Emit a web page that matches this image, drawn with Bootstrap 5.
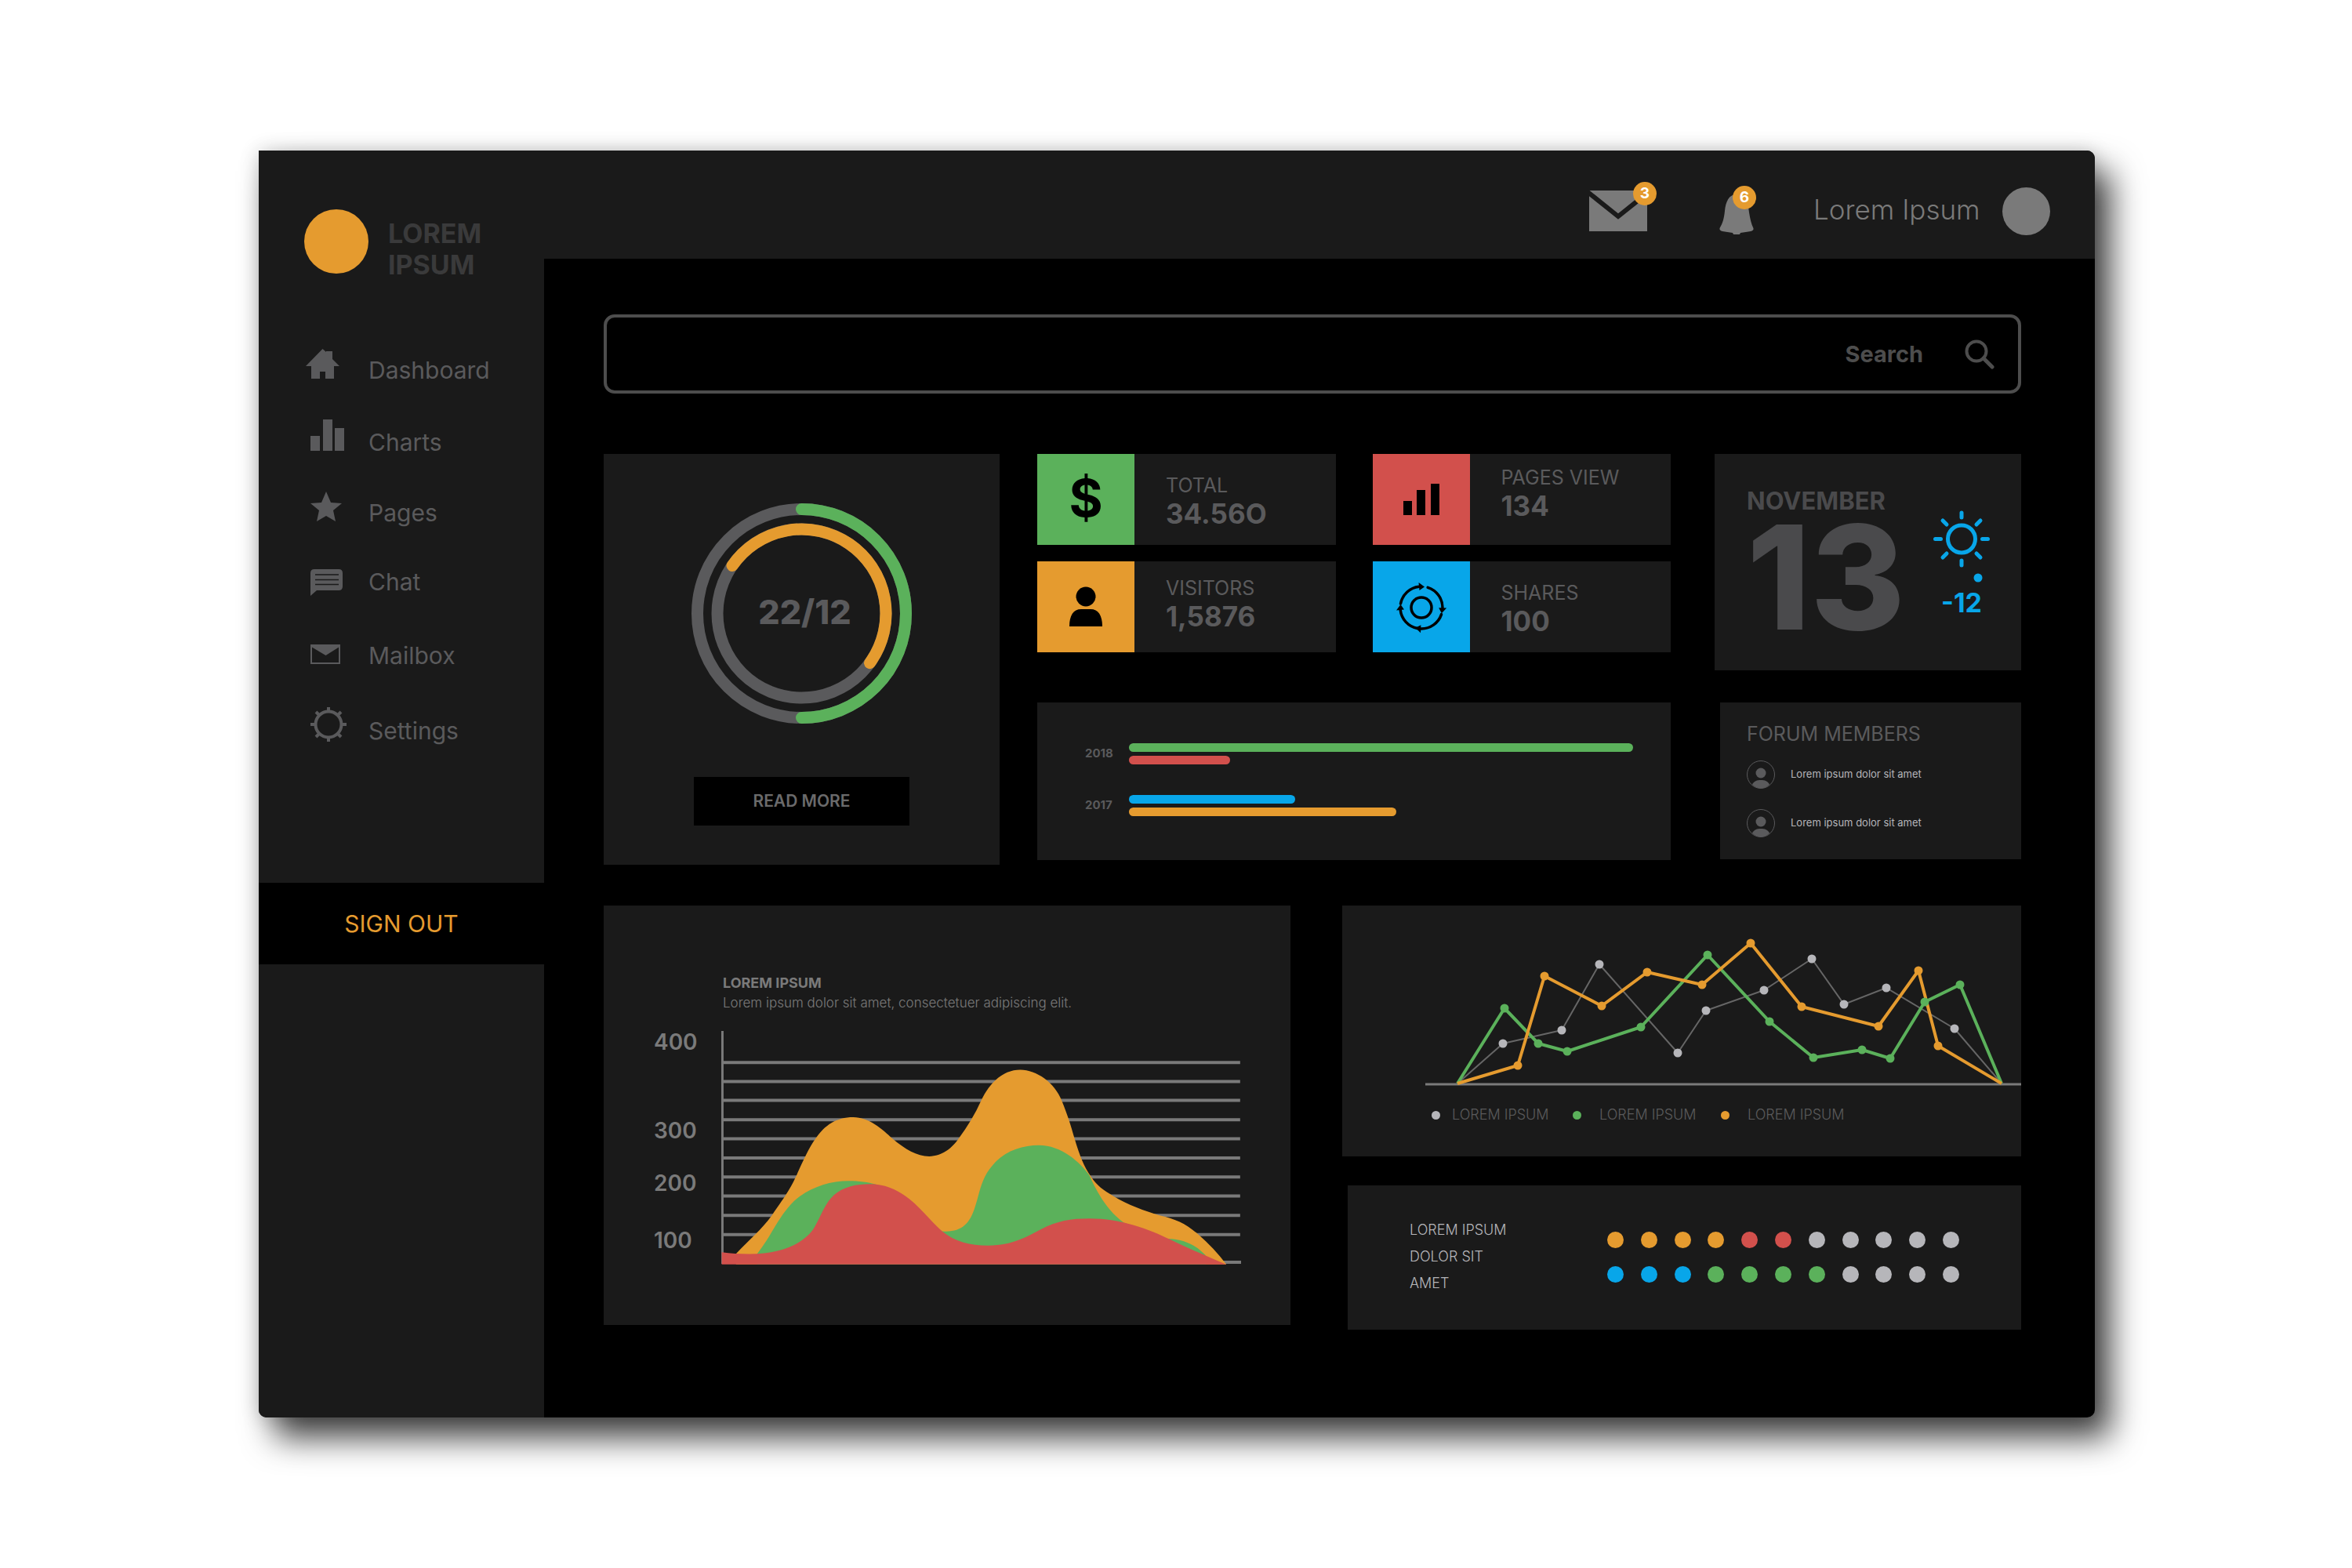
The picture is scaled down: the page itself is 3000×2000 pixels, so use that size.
<!DOCTYPE html>
<html lang="en">
<head>
<meta charset="utf-8">
<meta name="viewport" content="width=device-width, initial-scale=1">
<title>Dashboard</title>
<link rel="stylesheet" href="https://cdn.jsdelivr.net/npm/bootstrap@5.3.0/dist/css/bootstrap.min.css">
<style>
:root{--panel:#1a1a1a;--ink:#5a5a5c;--soft:#7a7a7a;--pale:#b6b6ba;--green:#5bb15b;--red:#d2504c;--orange:#e59b2f;--blue:#08a6e9}
body{background:#fff;color:var(--ink);font-family:Inter,"Noto Sans",sans-serif;padding:192px 328px 192px 330px}
a{color:inherit;text-decoration:none}
svg{display:block}
.app-window{background:#000;border-radius:0 10px 10px 10px;overflow:hidden;min-height:1616px;box-shadow:20px 26px 42px rgba(0,0,0,.74),0 0 24px rgba(0,0,0,.18)}
.side{flex:0 0 364px;background:var(--panel);padding-top:75px}
.brand{padding-left:58px;gap:25px;color:#3a3a3b;font-size:34px;line-height:40px;font-weight:700}
.brand-dot{width:82px;height:82px;background:var(--orange)}
.brand-name{padding-top:11px}
.side-nav{display:grid;grid-template-rows:92px 90px 88px 94px 96px 52px;margin-top:81px;padding-left:58px}
.side-nav a{display:flex;align-items:flex-end;gap:28px;height:52px;font-size:30px;line-height:38px}
.side-nav svg{width:54px;height:52px;fill:var(--ink)}
.sign-out{margin-top:175px;height:104px;background:#000;color:var(--orange);font-size:30px;border:0}
.topbar{height:138px;background:var(--panel);padding:16px 57px 0 0;color:var(--soft)}
.topbar svg{fill:var(--soft)}
.mail-link{margin-right:92px}
.bell-link{margin-right:76px}
.count{position:absolute;width:30px;height:30px;border-radius:50%;background:var(--orange);color:#fff;font-weight:700;font-size:19px;line-height:30px;text-align:center}
.mail-link .count{right:-12px;top:-11px}
.bell-link .count{right:-3px;top:-2px}
.user-name{width:241px;font-size:35px;font-weight:300;line-height:56px;white-space:nowrap;padding-bottom:4px}
.user-dot{width:61px;height:61px;background:var(--soft)}
.content{padding:71px 94px 0 76px}
.search{height:101px;border:4px solid #4d4d4d;border-radius:14px;padding-right:30px;color:#4d4d4d}
.search input{background:transparent;border:0;color:inherit;font-size:28px;padding-left:28px;outline:0;min-width:0}
.search label{font-size:29px;font-weight:700}
.search button{background:none;border:0;padding:0;margin-left:53px}
.tile{background:var(--panel)}
.row-top{margin-top:77px}
.row-low{display:grid;grid-template-columns:876fr 866fr;gap:66px;margin-top:52px}
.col-ring{flex:505 1 0;margin-right:48px;min-height:524px;padding-top:63px}
.col-mid{flex:808 1 0;margin-right:56px}
.col-date{flex:391 1 0}
.ring-box{width:281px;height:281px}
.ring-label{position:absolute;inset:0;line-height:277px;text-align:center;font-size:43px;font-weight:800;padding-left:8px}
.read-more{width:275px;height:62px;margin-top:68px;background:#000;border:0;color:#6a6a6b;font-weight:600;font-size:21px}
.stats{display:grid;grid-template-columns:1fr 1fr;gap:21px 47px}
.stat{height:116px}
.stat-icon{width:124px;color:#000;font-size:66px;font-weight:700;line-height:112px}
.stat-text{padding-left:40px}
.stat-name{font-size:25px;line-height:32px}
.stat-value{font-size:35px;line-height:40px;font-weight:700}
.bars{margin-top:64px;min-height:200px;padding:52px 48px 56px 61px;gap:39px}
.bars-year{width:56px;font-size:15px;font-weight:700}
.bar-line{height:11px;border-radius:6px}
.date-tile{min-height:276px;padding:42px 40px 40px 41px;color:#4a4a4c}
.month{font-size:31px;line-height:36px;font-weight:700}
.day{font-size:184px;line-height:158px;font-weight:800}
.weather{width:72px;padding-top:30px;color:var(--blue);font-size:34px;line-height:40px;font-weight:700;margin-left:auto}
.temp{margin-top:6px}
.forum{margin:41px 0 0 7px;min-height:200px;padding:24px 35px 26px 34px}
.forum-title{font-size:25px;line-height:32px}
.forum-list{margin-top:18px;gap:26px;font-size:13px;color:var(--pale)}
.forum-list li{gap:20px}
.area-tile{min-width:0;min-height:535px;padding:86px 63px 77px 64px;color:var(--soft)}
.area-head{padding-left:88px}
.area-title{font-size:18px;line-height:26px;font-weight:700}
.area-note{font-size:17px;line-height:24px;font-weight:300}
.area-scale{flex:0 0 86px;display:grid;grid-template-rows:113px 67px 73px 28px;font-size:28px;line-height:28px;font-weight:600}
.area-plot{width:100%;height:298px}
.col-right{min-width:0}
.line-tile{min-height:320px;padding:34px 0 41px 106px}
.line-plot{width:100%;height:198px}
.legend-row{margin-top:23px;padding-left:8px;font-size:18px;line-height:24px;font-weight:300}
.legend-row li{gap:23px;width:189px}
.legend-row li:first-child{gap:15px;width:180px}
.legend-dot{width:11px;height:11px}
.score-tile{margin:37px 0 0 7px;min-height:184px;padding:40px 79px 40px 79px}
.score-text{font-size:18px;line-height:34px;font-weight:300;color:var(--pale)}
.score-dots{width:449px;padding-top:19px;gap:23px}
.score-dots i{width:21px;height:21px;border-radius:50%}
.c-green{background:var(--green)}.c-red{background:var(--red)}.c-orange{background:var(--orange)}.c-blue{background:var(--blue)}.c-pale{background:var(--pale)}
</style>
</head>
<body>
<div class="app-window d-flex">
  <aside class="side d-flex flex-column">
    <div class="brand d-flex align-items-start">
      <span class="brand-dot rounded-circle"></span>
      <div class="brand-name">LOREM<br>IPSUM</div>
    </div>
    <nav class="side-nav">
      <a href="#"><svg viewBox="0 0 54 52"><path d="M2 28 23.500 6 28 10V9h8v10l9 9h-7v16H27V35h-7v9H9V28z"/></svg>Dashboard</a>
      <a href="#"><svg viewBox="0 0 54 52"><path d="M8 25h12v19H8zM24 4h12v40H24zM39 15h12v29H39z"/></svg>Charts</a>
      <a href="#"><svg viewBox="0 0 54 52"><path d="m28 6 6 14 14 1-11 9 3 14-12-7-12 7 3-14L8 21l14-1z"/></svg>Pages</a>
      <a href="#"><svg viewBox="0 0 54 52"><path d="M13 17h31q5 0 5 5v17q0 5-5 5H16l-8 7V22q0-5 5-5z"/><path d="M14 24h30M14 30.500h30M14 36.500h30" stroke="#1a1a1a" stroke-width="1.500"/></svg>Chat</a>
      <a href="#"><svg viewBox="0 0 54 52"><path d="M9 20h36v23H9z" fill="none" stroke="#5a5a5c" stroke-width="2"/><path d="M9 19h36v3L27.500 33 9 22z"/></svg>Mailbox</a>
      <a href="#"><svg viewBox="0 0 54 52"><g fill="none" stroke="#5a5a5c" stroke-width="4"><circle cx="31" cy="25" r="16.500"/><path d="M31 9V3M31 41v6M15 25H8M47 25h7M20 14l-5-5M42 14l5-5M20 36l-5 5M42 36l5 5"/></g></svg>Settings</a>
    </nav>
    <button type="button" class="sign-out">SIGN OUT</button>
  </aside>

  <div class="flex-grow-1">
    <header class="topbar d-flex justify-content-end align-items-center">
      <a href="#" class="mail-link position-relative" aria-label="Messages"><svg width="74" height="52" viewBox="0 0 74 52"><path d="M0 0h74v52H0z"/><path d="M-3 1 37 33 77 1" fill="none" stroke="#1a1a1a" stroke-width="6"/></svg><span class="count">3</span></a>
      <a href="#" class="bell-link position-relative" aria-label="Alerts"><svg width="44" height="60" viewBox="0 0 44 60"><path d="M22 9C12 9 8 19 7 30 6 40 4 46 1 51q-2 4 3 5 6 1 13 2 1 3 5 3t5-3q7-1 13-2 5-1 3-5-3-6-5-19C37 20 33 9 22 9z"/></svg><span class="count">6</span></a>
      <a href="#" class="user-name">Lorem Ipsum</a>
      <span class="user-dot rounded-circle"></span>
    </header>

    <main class="content">
      <form class="search d-flex align-items-center">
        <input type="text" id="q" class="flex-grow-1">
        <label for="q">Search</label>
        <button type="button" aria-label="Search"><svg width="38" height="38" viewBox="0 0 38 38" fill="none" stroke="#4d4d4d"><circle cx="15" cy="15" r="12.500" stroke-width="4"/><path d="m24 24 11 11" stroke-width="5" stroke-linecap="round"/></svg></button>
      </form>

      <div class="row-top d-flex align-items-start">
        <section class="tile col-ring d-flex flex-column align-items-center">
          <div class="ring-box position-relative">
            <svg viewBox="-140.500 -140.500 281 281" width="281" height="281" fill="none" stroke-width="15" stroke-linecap="round">
              <circle r="133" stroke="#5a5a5c"/><circle r="107.500" stroke="#5a5a5c"/>
              <path d="M0-133A133 133 0 0 1 0 133" stroke="#5bb15b"/>
              <circle r="107.500" stroke="#e59b2f" stroke-dasharray="340 400" transform="rotate(214.600)"/>
            </svg>
            <div class="ring-label">22/12</div>
          </div>
          <button type="button" class="read-more">READ MORE</button>
        </section>

        <div class="col-mid">
          <div class="stats">
            <section class="tile stat d-flex">
              <div class="stat-icon c-green text-center">$</div>
              <div class="stat-text d-flex flex-column justify-content-center pt-1"><div class="stat-name">TOTAL</div><div class="stat-value">34.56O</div></div>
            </section>
            <section class="tile stat d-flex">
              <div class="stat-icon c-red"><svg width="124" height="116" viewBox="0 0 124 116"><path d="M39 60h11v18H39zM56 46h11v32H56zM74 38h11v40H74z"/></svg></div>
              <div class="stat-text d-flex flex-column justify-content-center pb-3"><div class="stat-name">PAGES VIEW</div><div class="stat-value">134</div></div>
            </section>
            <section class="tile stat d-flex">
              <div class="stat-icon c-orange"><svg width="124" height="116" viewBox="0 0 124 116"><circle cx="62" cy="45" r="12.500"/><path d="M41 83c0-14 5-22 15-22h12c10 0 15 8 15 22z"/></svg></div>
              <div class="stat-text d-flex flex-column justify-content-center pb-2"><div class="stat-name">VISITORS</div><div class="stat-value">1,5876</div></div>
            </section>
            <section class="tile stat d-flex">
              <div class="stat-icon c-blue"><svg width="124" height="116" viewBox="0 0 124 116"><g transform="translate(62 59)"><circle r="13" fill="none" stroke="#000" stroke-width="3.500"/>
                <g id="arm"><path d="M-26.500-5A27 27 0 0 1-3-26.800" fill="none" stroke="#000" stroke-width="3.500" stroke-linecap="round"/><path d="M-3.500-32 4-26.500-2.500-22z"/></g>
                <use href="#arm" transform="rotate(97)"/><use href="#arm" transform="rotate(188)"/><use href="#arm" transform="rotate(270)"/></g></svg></div>
              <div class="stat-text d-flex flex-column justify-content-center pt-1"><div class="stat-name">SHARES</div><div class="stat-value">100</div></div>
            </section>
          </div>
          <section class="tile bars d-flex flex-column">
            <div class="d-flex align-items-center"><div class="bars-year">2018</div>
              <div class="flex-grow-1 d-grid" style="gap:5px"><div class="bar-line c-green" style="width:100%"></div><div class="bar-line c-red" style="width:20%"></div></div></div>
            <div class="d-flex align-items-center"><div class="bars-year">2017</div>
              <div class="flex-grow-1 d-grid" style="gap:5px"><div class="bar-line c-blue" style="width:33%"></div><div class="bar-line c-orange" style="width:53%"></div></div></div>
          </section>
        </div>

        <div class="col-date">
          <section class="tile date-tile d-flex">
            <div><div class="month">NOVEMBER</div><div class="day">13</div></div>
            <div class="weather">
              <svg width="72" height="92" viewBox="0 0 72 92"><g fill="none" stroke="#08a6e9" stroke-width="5" stroke-linecap="round"><circle cx="36" cy="36.500" r="17.500"/><path d="M36 3v6M36 64v6M2.500 36.500h7M62.500 36.500h7M12 13l5 5M60 13l-5 5M12 60l5-5M60 60l-5-5"/></g><circle cx="57" cy="86" r="5.500" fill="#08a6e9"/></svg>
              <div class="temp text-center">-12</div>
            </div>
          </section>
          <section class="tile forum">
            <div class="forum-title">FORUM MEMBERS</div>
            <ul class="forum-list list-unstyled d-flex flex-column mb-0">
              <li class="d-flex align-items-center"><svg width="36" height="36" viewBox="0 0 36 36" fill="#5a5a5c"><circle cx="18" cy="18" r="17.500" fill="none" stroke="#5a5a5c"/><circle cx="18" cy="16" r="6.500"/><path d="M7 31c2-5 6-6 11-6s9 1 11 6q-11 9-22 0z"/></svg>Lorem ipsum dolor sit amet</li>
              <li class="d-flex align-items-center"><svg width="36" height="36" viewBox="0 0 36 36" fill="#5a5a5c"><circle cx="18" cy="18" r="17.500" fill="none" stroke="#5a5a5c"/><circle cx="18" cy="16" r="6.500"/><path d="M7 31c2-5 6-6 11-6s9 1 11 6q-11 9-22 0z"/></svg>Lorem ipsum dolor sit amet</li>
            </ul>
          </section>
        </div>
      </div>

      <div class="row-low align-items-start">
        <section class="tile area-tile">
          <div class="area-head"><div class="area-title">LOREM IPSUM</div><div class="area-note">Lorem ipsum dolor sit amet, consectetuer adipiscing elit.</div></div>
          <div class="d-flex mt-4">
            <div class="area-scale"><span>400</span><span>300</span><span>200</span><span>100</span></div>
            <div class="flex-grow-1">
              <svg class="area-plot" viewBox="290 484 1130 820" preserveAspectRatio="none">
                <path fill="#7a7a7a" d="M289 484h6v817h-6zM292 589h1126v11H292zM292 656h1126v11H292zM292 722h1126v11H292zM292 790h1126v11H292zM292 857h1126v11H292zM292 924h1126v11H292zM292 991h1126v11H292zM292 1058h1126v11H292zM292 1126h1126v11H292zM292 1193h1126v11H292zM292 1290h1128v11H292z"/>
                <path fill="#e59b2f" d="M322 1266C352 1215 378 1180 400 1131C428 1065 440 1040 452 996C468 940 480 895 495 862C515 815 540 787 577 787C610 787 640 828 662 862C690 900 715 924 742 924C770 924 792 895 806 862C825 820 842 775 855 728C875 660 905 620 940 620C975 620 1015 665 1030 728C1042 775 1050 815 1058 862C1070 925 1078 960 1094 996C1105 1025 1122 1045 1142 1063C1175 1095 1210 1115 1243 1131C1280 1145 1300 1160 1327 1198C1350 1230 1370 1265 1388 1303H322z"/>
                <path fill="#5bb15b" d="M368 1266C400 1200 410 1150 440 1095C470 1040 520 1010 567 1010C590 1010 610 1015 625 1022L770 1187C810 1192 830 1165 842 1100C852 1050 855 1000 880 955C905 905 945 885 980 885C1030 885 1070 945 1090 990C1110 1060 1130 1115 1165 1157L1260 1213C1300 1215 1325 1240 1343 1272V1303H368z"/>
                <path fill="#d2504c" d="M291 1261C310 1266 330 1267 350 1267C430 1267 475 1220 492 1175C508 1130 515 1090 535 1060C555 1030 585 1021 613 1021C690 1021 730 1130 770 1187C800 1225 830 1237 870 1237C920 1237 950 1210 985 1180C1020 1150 1050 1142 1090 1142C1160 1142 1220 1180 1265 1215C1310 1250 1350 1278 1388 1303H291z"/>
              </svg>
            </div>
          </div>
        </section>

        <div class="col-right">
          <section class="tile line-tile">
            <svg class="line-plot" viewBox="0 0 760 198" preserveAspectRatio="none" fill="none" stroke-linejoin="round">
              <path d="M0 194h760" stroke="#7a7a7a" stroke-width="3"/>
              <path d="M41 193 99 142 174 125 222 41 322 154 358 100 432 74 493 34 534 92 588 71 675 123 735 193" stroke="#666" stroke-width="2"/>
              <path d="M41 193 101 97 144 142 181 152 275 121 360 29 439 114 495 160 557 150 593 161 637 89 682 67 735 193" stroke="#5bb15b" stroke-width="4"/>
              <path d="M41 193 118 170 152 56 225 94 283 51 353 67 415 14 480 95 578 120 629 49 654 145 735 193" stroke="#e59b2f" stroke-width="4"/>
              <g stroke-width="11" stroke-linecap="round">
                <path stroke="#b6b6ba" d="M99 142h0M174 125h0M222 41h0M322 154h0M358 100h0M432 74h0M493 34h0M534 92h0M588 71h0M675 123h0"/>
                <path stroke="#5bb15b" d="M101 97h0M144 142h0M181 152h0M275 121h0M360 29h0M439 114h0M495 160h0M557 150h0M593 161h0M637 89h0M682 67h0"/>
                <path stroke="#e59b2f" d="M118 170h0M152 56h0M225 94h0M283 51h0M353 67h0M415 14h0M480 95h0M578 120h0M629 49h0M654 145h0"/>
              </g>
            </svg>
            <ul class="legend-row list-unstyled d-flex mb-0">
              <li class="d-flex align-items-center"><span class="legend-dot rounded-circle c-pale"></span>LOREM IPSUM</li>
              <li class="d-flex align-items-center"><span class="legend-dot rounded-circle c-green"></span>LOREM IPSUM</li>
              <li class="d-flex align-items-center"><span class="legend-dot rounded-circle c-orange"></span>LOREM IPSUM</li>
            </ul>
          </section>
          <section class="tile score-tile d-flex justify-content-between">
            <div class="score-text">LOREM IPSUM<br>DOLOR SIT<br>AMET</div>
            <div class="score-dots d-flex flex-column">
              <div class="d-flex justify-content-between"><i class="c-orange"></i><i class="c-orange"></i><i class="c-orange"></i><i class="c-orange"></i><i class="c-red"></i><i class="c-red"></i><i class="c-pale"></i><i class="c-pale"></i><i class="c-pale"></i><i class="c-pale"></i><i class="c-pale"></i></div>
              <div class="d-flex justify-content-between"><i class="c-blue"></i><i class="c-blue"></i><i class="c-blue"></i><i class="c-green"></i><i class="c-green"></i><i class="c-green"></i><i class="c-green"></i><i class="c-pale"></i><i class="c-pale"></i><i class="c-pale"></i><i class="c-pale"></i></div>
            </div>
          </section>
        </div>
      </div>
    </main>
  </div>
</div>
<script src="https://cdn.jsdelivr.net/npm/bootstrap@5.3.0/dist/js/bootstrap.bundle.min.js"></script>
</body>
</html>
